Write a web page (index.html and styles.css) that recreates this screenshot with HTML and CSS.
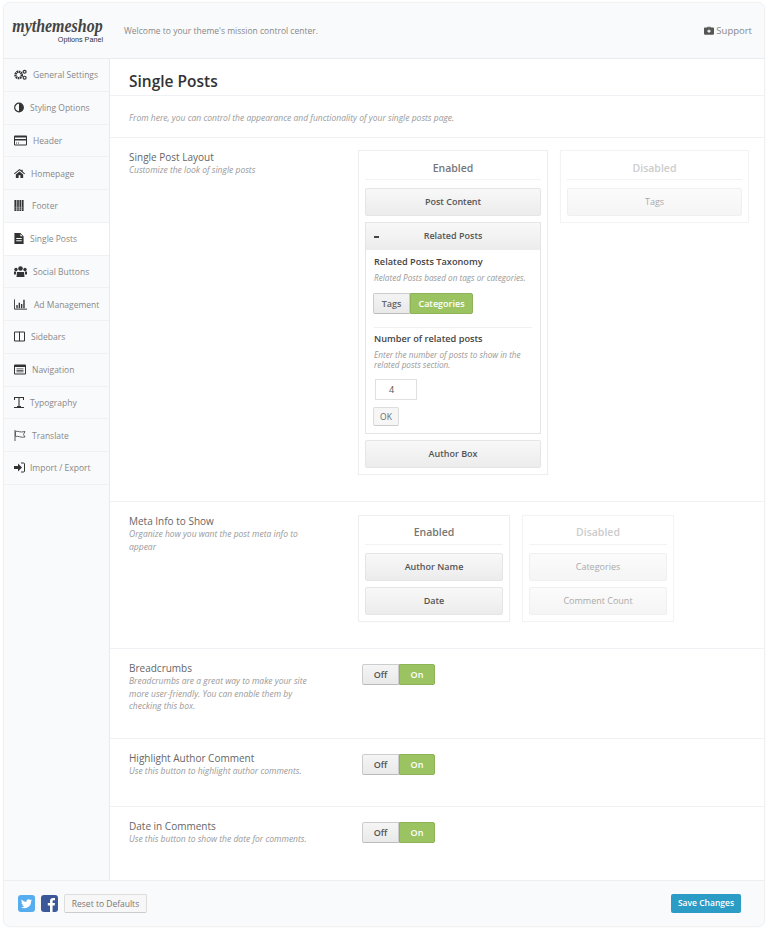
FILE: index.html
```html
<!DOCTYPE html>
<html lang="en">
<head>
<meta charset="utf-8">
<title>Options Panel</title>
<link rel="stylesheet" href="styles.css">
</head>
<body>
<div class="panel">
  <header class="top">
    <div class="logo"><div class="logo-name">mythemeshop</div><div class="logo-sub">Options Panel</div></div>
    <div class="welcome">Welcome to your theme's mission control center.</div>
    <div class="support">
      <svg class="sup-ic" viewBox="0 0 12 10"><path d="M4 1.500V.6h4v.9h3a1 1 0 0 1 1 1V9a1 1 0 0 1-1 1H1a1 1 0 0 1-1-1V2.500a1 1 0 0 1 1-1zM5 1.500h2V1.200H5zM5.300 3.700v1.300H4v1.400h1.300v1.300h1.400V6.400H8V5H6.700V3.700z" fill="#555" fill-rule="evenodd"/></svg>
      <span>Support</span>
    </div>
  </header>
  <div class="body">
    <nav class="side">
      <div class="nav"><svg class="ic w13" viewBox="0 0 14 12"><circle cx="5" cy="6.500" r="3.500" fill="none" stroke="#333" stroke-width="2.600" stroke-dasharray="1.700 .6"/><circle cx="11.500" cy="3" r="1.600" fill="none" stroke="#333" stroke-width="1.300"/><circle cx="11.500" cy="9.500" r="1.600" fill="none" stroke="#333" stroke-width="1.300"/></svg><span class="n n1">General Settings</span></div>
      <div class="nav"><svg class="ic w10" viewBox="0 0 10 10"><circle cx="5" cy="5" r="4.300" fill="none" stroke="#333" stroke-width="1.200"/><path d="M5 .7a4.300 4.300 0 0 1 0 8.600z" fill="#333"/></svg><span class="n n2">Styling Options</span></div>
      <div class="nav"><svg class="ic w13" viewBox="0 0 13 10"><path d="M1 0h11a1 1 0 0 1 1 1v8a1 1 0 0 1-1 1H1a1 1 0 0 1-1-1V1a1 1 0 0 1 1-1zM1 2v1.500h11V2zM1 5v4h11V5zM2 7h1v1H2zM4 7h1v1H4z" fill="#333" fill-rule="evenodd"/></svg><span class="n n1">Header</span></div>
      <div class="nav"><svg class="ic w11" viewBox="0 0 12 10"><path d="M6 0l2.200 1.800V.8h1.300v2.100L12 5l-.7.800L6 1.500.7 5.800 0 5zM2 6l4-3.200L10 6v4H7V7H5v3H2z" fill="#333"/></svg><span class="n n3">Homepage</span></div>
      <div class="nav"><svg class="ic w10" viewBox="0 0 10 12"><path d="M0 0h2.200v12H0zM3 0h1.800v12H3zM5.500 0h1.800v12H5.500zM8 0h2v12H8z" fill="#333"/><path d="M1 8h8M1 10h8" stroke="#bbb" stroke-width=".6"/></svg><span class="n n4">Footer</span></div>
      <div class="nav active"><svg class="ic w10" viewBox="0 0 10 12"><path d="M0 0h6.500L10 3.500V12H0zM2 5.500v1h6v-1zM2 8v1h6V8zM6.500 1v2.500H9z" fill="#333" fill-rule="evenodd"/></svg><span class="n n2">Single Posts</span></div>
      <div class="nav"><svg class="ic w13" viewBox="0 0 13 11"><circle cx="6.500" cy="2.500" r="2.300" fill="#333"/><circle cx="2" cy="3.500" r="1.700" fill="#333"/><circle cx="11" cy="3.500" r="1.700" fill="#333"/><path d="M3 6h7l.500 5h-8zM0 5.500h2.200L1.800 8.500H0zM10.800 5.500H13v3h-1.800z" fill="#333"/></svg><span class="n n1">Social Buttons</span></div>
      <div class="nav"><svg class="ic w14" viewBox="0 0 14 11"><path d="M.5 0v10.500H14" fill="none" stroke="#333"/><path d="M2.500 6h1.500v3.500H2.500zM5 3.500h1.500v6H5zM7.500 5h1.500v4.500H7.500zM10 .5h1.500v9H10z" fill="#333"/></svg><span class="n n5">Ad Management</span></div>
      <div class="nav"><svg class="ic w11" viewBox="0 0 11 10"><path d="M.5.500h10v9H.5zM5.500.500v9" fill="none" stroke="#333"/></svg><span class="n n3">Sidebars</span></div>
      <div class="nav"><svg class="ic w12" viewBox="0 0 12 10"><path d="M1 0h10a1 1 0 0 1 1 1v8a1 1 0 0 1-1 1H1a1 1 0 0 1-1-1V1a1 1 0 0 1 1-1zM1 2.500V9h10V2.500zM2.500 4h7v.8h-7zM2.500 5.500h7v.8h-7zM2.500 7h7v.8h-7z" fill="#333" fill-rule="evenodd"/></svg><span class="n n6">Navigation</span></div>
      <div class="nav"><svg class="ic w10" viewBox="0 0 10 11"><path d="M.5 3V.5h9V3M5 .5v9M3 9.500h4M0 10.600h10" fill="none" stroke="#333" stroke-width="1.100"/></svg><span class="n n2">Typography</span></div>
      <div class="nav"><svg class="ic w12" viewBox="0 0 12 11"><path d="M1 0v11" stroke="#555" fill="none"/><path d="M1.500 1.500C4 .5 6 3 11 1.500L9.500 4.500 11 7C7 8 4 5.500 1.500 6.500z" fill="none" stroke="#555" stroke-width=".9"/></svg><span class="n n6">Translate</span></div>
      <div class="nav"><svg class="ic w11" viewBox="0 0 11 10"><path d="M0 3.500h4V1l4 4-4 4V6.500H0z" fill="#333"/><path d="M7 .5h2.500a1 1 0 0 1 1 1v7a1 1 0 0 1-1 1H7" fill="none" stroke="#333"/></svg><span class="n n7">Import / Export</span></div>
    </nav>
    <main class="main">
      <h1 class="title">Single Posts</h1>
      <p class="intro">From here, you can control the appearance and functionality of your single posts page.</p>

      <section class="row row-layout">
        <div class="label"><h3>Single Post Layout</h3><p>Customize the look of single posts</p></div>
        <div class="cards">
          <div class="card wide">
            <div class="card-h">Enabled</div>
            <div class="item">Post Content</div>
            <div class="open">
              <div class="item head"><span class="minus"></span>Related Posts</div>
              <div class="open-body">
                <h4>Related Posts Taxonomy</h4>
                <p class="opt-d">Related Posts based on tags or categories.</p>
                <div class="seg"><span class="s-off">Tags</span><span class="s-on">Categories</span></div>
                <div class="opt-sep"></div>
                <h4>Number of related posts</h4>
                <p class="opt-d">Enter the number of posts to show in the related posts section.</p>
                <div class="num">4</div>
                <div class="ok">OK</div>
              </div>
            </div>
            <div class="item">Author Box</div>
          </div>
          <div class="card wide off">
            <div class="card-h">Disabled</div>
            <div class="item">Tags</div>
          </div>
        </div>
      </section>

      <section class="row row-meta">
        <div class="label"><h3>Meta Info to Show</h3><p>Organize how you want the post meta info to appear</p></div>
        <div class="cards">
          <div class="card narrow">
            <div class="card-h">Enabled</div>
            <div class="item">Author Name</div>
            <div class="item">Date</div>
          </div>
          <div class="card narrow off">
            <div class="card-h">Disabled</div>
            <div class="item">Categories</div>
            <div class="item">Comment Count</div>
          </div>
        </div>
      </section>

      <section class="row row-bc">
        <div class="label"><h3>Breadcrumbs</h3><p>Breadcrumbs are a great way to make your site more user-friendly. You can enable them by checking this box.</p></div>
        <div class="toggle"><span class="t-off">Off</span><span class="t-on">On</span></div>
      </section>
      <section class="row row-ha">
        <div class="label"><h3>Highlight Author Comment</h3><p>Use this button to highlight author comments.</p></div>
        <div class="toggle"><span class="t-off">Off</span><span class="t-on">On</span></div>
      </section>
      <section class="row row-dc">
        <div class="label"><h3>Date in Comments</h3><p>Use this button to show the date for comments.</p></div>
        <div class="toggle"><span class="t-off">Off</span><span class="t-on">On</span></div>
      </section>
    </main>
  </div>
  <footer class="foot">
    <svg class="soc" viewBox="0 0 17 17"><rect width="17" height="17" rx="3" fill="#55acee"/><path d="M14 5.200a4.500 4.500 0 0 1-1.300.4c.5-.3.800-.7 1-1.300-.4.300-.9.500-1.400.6a2.300 2.300 0 0 0-3.900 2.100A6.400 6.400 0 0 1 3.700 4.600c-.6 1-.3 2.300.7 3-.4 0-.7-.1-1-.3 0 1.100.8 2.100 1.800 2.300-.3.100-.7.100-1 0 .3.900 1.100 1.600 2.100 1.600A4.600 4.600 0 0 1 3 12.200a6.500 6.500 0 0 0 10-5.800c.4-.3.700-.7 1-1.200z" fill="#fff"/></svg>
    <svg class="soc" viewBox="0 0 17 17"><rect width="17" height="17" rx="3" fill="#3b5998"/><path d="M11.600 17v-6.400h2.100l.3-2.500h-2.400V6.500c0-.7.200-1.200 1.200-1.200H14V3.100c-.2 0-1-.1-1.900-.1-1.900 0-3.100 1.100-3.100 3.200v1.900H6.800v2.500H9V17z" fill="#fff"/></svg>
    <div class="reset">Reset to Defaults</div>
    <div class="save">Save Changes</div>
  </footer>
</div>
</body>
</html>
```

FILE: styles.css
```css
* { box-sizing: border-box; }
html, body { margin: 0; padding: 0; background: #fff; }
body { width: 768px; height: 931px; padding: 3px 4px 5px 4px; font-family: "Open Sans", sans-serif; color: #555; overflow: hidden; }
h1, h3, h4, p { margin: 0; }

.panel { width: 760px; height: 923px; display: flex; flex-direction: column; border-radius: 6px; box-shadow: 0 0 2px rgba(0,0,0,.22); background: #fff; }

.top { height: 56px; flex: none; display: flex; align-items: center; background: #f9fafc; border-bottom: 1px solid #e9ecef; border-radius: 6px 6px 0 0; padding-right: 12px; }
.logo { width: 99px; margin-right: 21px; display: flex; flex-direction: column; align-items: flex-end; }
.logo-name { font-family: "Liberation Serif", serif; font-weight: 700; font-style: italic; font-size: 19px; line-height: 19px; color: #444; white-space: nowrap; transform: scaleX(.84); transform-origin: right center; }
.logo-sub { font-family: "Liberation Sans", sans-serif; font-size: 7.200px; line-height: 10px; color: #333; }
.welcome { flex: 1; font-size: 8.500px; color: #888; }
.support { display: flex; align-items: center; gap: 2px; font-size: 9.500px; color: #888; }
.sup-ic { width: 10px; height: 9px; }

.body { flex: 1; display: flex; min-height: 0; }

.side { width: 106px; flex: none; background: #f9fafc; border-right: 1px solid #e9ecef; }
.nav { height: 32.750px; display: flex; align-items: center; border-bottom: 1px solid #eff1f4; padding-left: 10px; font-size: 8.500px; color: #888; }
.active { background: #fff; }
.ic { height: 11px; flex: none; }
.w10 { width: 10px; }
.w11 { width: 11px; }
.w12 { width: 12px; }
.w13 { width: 13px; }
.w14 { width: 13px; }
.n { white-space: nowrap; }
.n1 { margin-left: 6px; }
.n2 { margin-left: 6px; }
.n3 { margin-left: 6px; }
.n4 { margin-left: 8px; }
.n5 { margin-left: 7px; }
.n6 { margin-left: 6px; }
.n7 { margin-left: 5px; }

.main { flex: 1; min-width: 0; background: #fff; }
.title { height: 37px; font-size: 15.500px; font-weight: 600; line-height: 45px; color: #333; padding-left: 19px; border-bottom: 1px solid #eff1f4; }
.intro { height: 42px; font-size: 8.500px; font-style: italic; line-height: 43px; color: #999; padding-left: 19px; border-bottom: 1px solid #eff1f4; }

.row { display: flex; padding: 12px 0 0 19px; border-bottom: 1px solid #eff1f4; }
.row-layout { height: 364px; }
.row-meta { height: 147px; }
.row-meta .cards { margin-top: 1px; }
.row-meta .card-h { line-height: 19px; }
.row-bc { height: 90px; }
.row-ha { height: 68px; }
.row-dc { height: 74px; border-bottom: 0; }

.label { width: 229px; flex: none; }
.label h3 { font-size: 10px; font-weight: 400; line-height: 14px; color: #666; }
.label p { width: 180px; font-size: 8.500px; font-style: italic; line-height: 12.500px; color: #999; }

.cards { display: flex; gap: 12px; align-items: flex-start; }
.card { border: 1px solid #eceef0; padding: 7px 6px 6px; background: #fff; box-shadow: 0 0 1px rgba(0,0,0,.04); }
.wide { width: 190px; }
.wide.off { width: 189px; }
.narrow { width: 152px; }
.card-h { height: 22px; text-align: center; font-size: 10.500px; font-weight: 600; line-height: 21px; color: #777; border-bottom: 1px solid #f2f3f4; margin-bottom: 8px; }
.item { height: 28px; margin-bottom: 6px; text-align: center; font-size: 9px; font-weight: 600; line-height: 26px; color: #555; border: 1px solid #e5e5e5; border-radius: 2px; background: linear-gradient(#f8f8f8, #ececec); position: relative; }
.item:last-child { margin-bottom: 0; }
.off .card-h { color: #ccc; }
.off { border-color: #f3f3f3; }
.off .item { color: #aaa; border-color: #f0f0f0; background: linear-gradient(#fbfbfb, #f5f5f5); font-weight: 400; }

.open { border: 1px solid #e5e5e5; margin-bottom: 6px; }
.item.head { margin: 0; border: 0; border-radius: 0; height: 27px; }
.minus { position: absolute; left: 8px; top: 13px; width: 5px; height: 2px; background: #444; }
.open-body { padding: 5px 8px 6px 8px; background: #fff; height: 183px; }
.open-body h4 { font-size: 9.200px; font-weight: 600; line-height: 14px; color: #444; }
.opt-d { font-size: 8.200px; font-style: italic; line-height: 10.500px; color: #999; margin-top: 4px; }
.seg { display: flex; width: 100px; height: 21px; margin: 9px 0 0 -1px; border-radius: 2px; font-size: 9px; font-weight: 600; line-height: 19px; text-align: center; }
.s-off { width: 37px; color: #666; border: 1px solid #ccc; border-bottom-color: #bbb; background: linear-gradient(#f4f4f4, #e9e9e9); border-radius: 2px 0 0 2px; }
.s-on { width: 63px; color: #fff; background: #9bc362; border: 1px solid #8eb356; border-radius: 0 2px 2px 0; }
.opt-sep { border-top: 1px solid #f0f0f0; margin-top: 13px; margin-bottom: 4px; }
.num { width: 42px; height: 21px; margin-top: 8px; margin-left: 1px; border: 1px solid #e0e0e0; font-size: 9px; line-height: 19px; padding-left: 13px; color: #555; }
.ok { width: 26px; height: 19px; margin: 7px 0 0 -1px; border: 1px solid #ddd; border-bottom-color: #ccc; border-radius: 2px; background: #f6f6f6; font-size: 8.500px; line-height: 17px; text-align: center; color: #666; }

.toggle { display: flex; width: 73px; height: 21px; margin-top: 3px; margin-left: 4px; font-size: 9px; font-weight: 600; line-height: 19px; text-align: center; }
.t-off { width: 37px; color: #555; background: linear-gradient(#f5f5f5, #e9e9e9); border: 1px solid #ccc; border-bottom-color: #bbb; border-radius: 2px 0 0 2px; }
.t-on { width: 36px; color: #fff; background: #9bc362; border: 1px solid #8eb356; border-radius: 0 2px 2px 0; }

.foot { height: 46px; flex: none; display: flex; align-items: center; padding: 0 23px 0 14px; background: #f9fafc; border-top: 1px solid #eceef1; border-radius: 0 0 6px 6px; }
.soc { width: 17px; height: 17px; margin-right: 6px; flex: none; }
.reset { height: 19px; width: 83px; text-align: center; border: 1px solid #ddd; border-bottom-color: #ccc; border-radius: 2px; background: #f7f7f7; font-size: 8.500px; line-height: 17px; color: #777; }
.save { margin-left: auto; width: 70px; height: 19px; text-align: center; background: #2b9cc6; border-radius: 2px; font-size: 8.500px; font-weight: 600; line-height: 18px; color: #fff; }
```
